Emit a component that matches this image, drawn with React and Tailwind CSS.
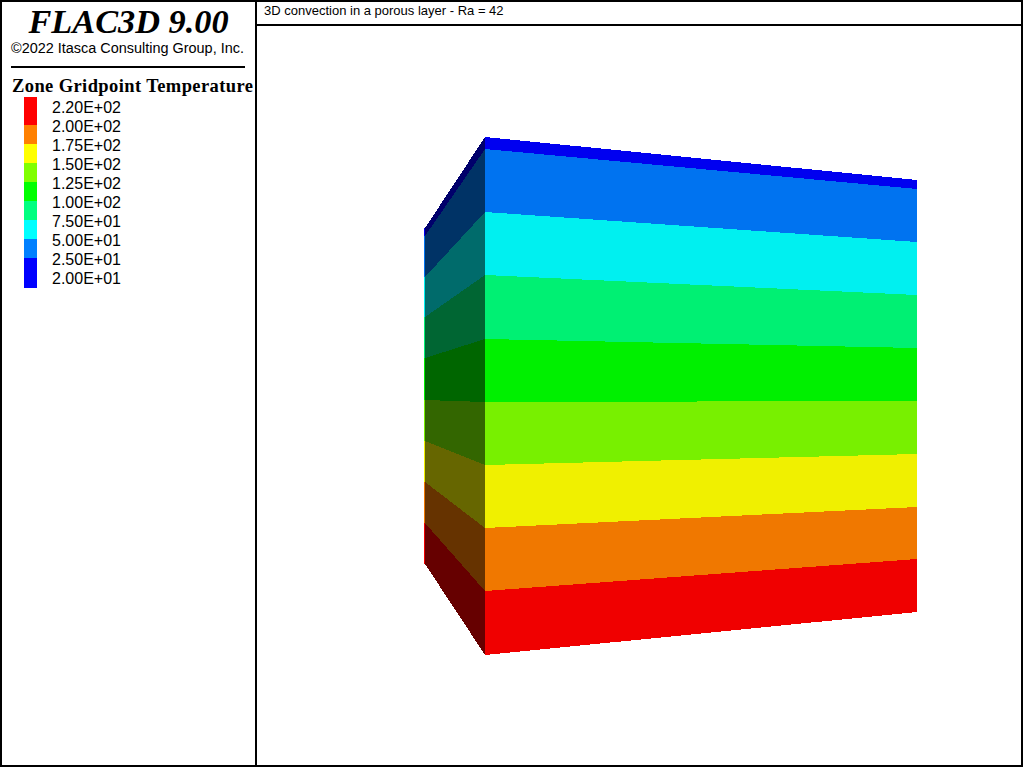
const legend = [
  { label: '2.20E+02', color: 'bg-[#ff0000]', height: 'h-[28px]' },
  { label: '2.00E+02', color: 'bg-[#ff8000]', height: 'h-[19px]' },
  { label: '1.75E+02', color: 'bg-[#ffff00]', height: 'h-[19px]' },
  { label: '1.50E+02', color: 'bg-[#80ff00]', height: 'h-[19px]' },
  { label: '1.25E+02', color: 'bg-[#00ff00]', height: 'h-[19px]' },
  { label: '1.00E+02', color: 'bg-[#00ff80]', height: 'h-[19px]' },
  { label: '7.50E+01', color: 'bg-[#00ffff]', height: 'h-[19px]' },
  { label: '5.00E+01', color: 'bg-[#0080ff]', height: 'h-[19px]' },
  { label: '2.50E+01', color: 'bg-[#0000ff]', height: 'h-[30px]' },
  { label: '2.00E+01' },
];

// y of each band boundary: left edge of side face, block corner, right edge of front face
const sideY = [228, 236, 277, 317, 358, 400, 441, 482, 523, 564];
const cornerY = [137, 149, 212, 275, 339, 402, 465, 528, 591, 655];
const frontY = [180, 189, 242, 295, 348, 401, 454, 507, 559, 612];

const frontColors = ['#0000f0', '#0073f0', '#00f0f0', '#00f073', '#00f000', '#78f000', '#f0f000', '#f07800', '#f00000'];
const sideColors = ['#00006b', '#003366', '#006b6b', '#006633', '#006600', '#336600', '#666600', '#663300', '#660000'];

function Block() {
  return (
    <svg className="block h-full w-full" viewBox="257 26 764 739" shapeRendering="crispEdges">
      {frontColors.map((color, i) => (
        <g key={color}>
          <rect x="424" y={sideY[i]} width="1" height={sideY[i + 1] - sideY[i]} fill={i === 0 ? '#0000f0' : color} />
          <polygon
            points={`425,${sideY[i]} 485,${cornerY[i]} 485,${cornerY[i + 1]} 425,${sideY[i + 1]}`}
            fill={sideColors[i]}
          />
          <polygon
            points={`485,${cornerY[i]} 917,${frontY[i]} 917,${frontY[i + 1]} 485,${cornerY[i + 1]}`}
            fill={color}
          />
        </g>
      ))}
    </svg>
  );
}

export default function App() {
  return (
    <div className="flex h-[767px] w-[1023px] border-2 border-black bg-white text-black">
      <aside className="w-[255px] shrink-0 border-r-2 border-black">
        <h1 className="text-center font-['Liberation_Serif',serif] text-[34.3px] leading-[38px] font-bold italic">
          FLAC3D 9.00
        </h1>
        <p className="ml-[9px] font-['Liberation_Sans',sans-serif] text-[14.45px] leading-[16px] whitespace-nowrap">
          ©2022 Itasca Consulting Group, Inc.
        </p>
        <div className="mt-[10px] ml-[9px] h-[2px] w-[234px] bg-black" />
        <h2 className="mt-[8px] ml-[10px] font-['Liberation_Serif',serif] text-[18.5px] leading-[20px] font-bold tracking-[0.4px] whitespace-nowrap">
          Zone Gridpoint Temperature
        </h2>
        <div className="mt-[1px] ml-[22px] flex gap-[15px]">
          <div className="w-[13px]">
            {legend.filter((item) => item.color).map((item) => (
              <div key={item.label} className={`${item.color} ${item.height}`} />
            ))}
          </div>
          <ul className="mt-[1px] font-['Liberation_Sans',sans-serif] text-[16px] leading-[19px]">
            {legend.map((item) => (
              <li key={item.label}>{item.label}</li>
            ))}
          </ul>
        </div>
      </aside>
      <main className="flex min-w-0 flex-1 flex-col">
        <header className="h-[24px] shrink-0 border-b-2 border-black pl-[7px] font-['Liberation_Sans',sans-serif] text-[13px] leading-[18px] whitespace-nowrap">
          3D convection in a porous layer - Ra = 42
        </header>
        <div className="min-h-0 flex-1">
          <Block />
        </div>
      </main>
    </div>
  );
}
